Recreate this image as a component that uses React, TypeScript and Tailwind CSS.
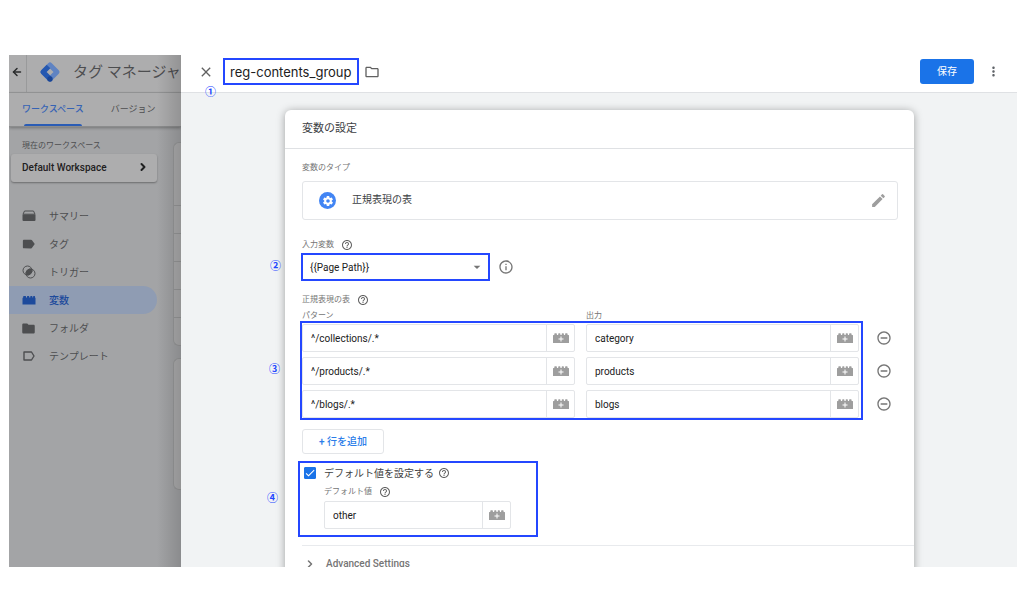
import { useState } from "react";
import type { ReactNode } from "react";
import { ArrowLeft, ChevronRight } from "lucide-react";
import {
  MdArrowDropDown,
  MdCheck,
  MdClose,
  MdFolder,
  MdHelpOutline,
  MdInfoOutline,
  MdLabel,
  MdMoreVert,
  MdOutlineFolder,
  MdRemoveCircleOutline,
} from "react-icons/md";

interface Row {
  pattern: string;
  output: string;
}

const initialRows: Row[] = [
  { pattern: "^/collections/.*", output: "category" },
  { pattern: "^/products/.*", output: "products" },
  { pattern: "^/blogs/.*", output: "blogs" },
];

const LogoIcon = () => (
  <svg width="22" height="22" viewBox="0 0 22 22" fill="none" strokeWidth="5" strokeLinejoin="round" className="shrink-0">
    <path d="M11 4l7 7-7 7-7-7z" stroke="#5f83c2" />
    <path d="M9.500 5.500L4 11l7 7" stroke="#2558b0" />
    <circle cx="11" cy="18" r="2.700" fill="#194596" />
  </svg>
);

const SummaryIcon = () => (
  <svg width="14" height="12" viewBox="0 0 14 12" fill="currentColor">
    <path d="M2.500 1h9L13 4.200H1z" fill="none" stroke="currentColor" />
    <path d="M.5 4.500h13V10a1 1 0 01-1 1h-11a1 1 0 01-1-1z" />
  </svg>
);

const TriggerIcon = () => (
  <svg width="14" height="14" viewBox="0 0 14 14" fill="none" stroke="currentColor">
    <circle cx="5.500" cy="5.500" r="4.500" />
    <circle cx="8.500" cy="8.500" r="4.500" />
    <path d="M4.200 9.800A4.500 4.500 0 019.800 4.200 4.500 4.500 0 014.200 9.800z" fill="currentColor" />
  </svg>
);

const TemplateIcon = () => (
  <svg width="12" height="10" viewBox="0 0 12 10" fill="none" stroke="currentColor" strokeWidth="1.400" strokeLinejoin="round">
    <path d="M1 1h7.500L11 5 8.500 9H1z" />
  </svg>
);

const BrickIcon = () => (
  <svg width="14" height="10" viewBox="0 0 14 10" fill="currentColor">
    <path d="M.5 3.500Q.5 2.500 1.200 2.500V1.500Q1.200 1 1.700 1h1.800q.5 0 .5.500v1h1v-1Q5 1 5.500 1h1.200q.5 0 .5.500v1h1.100v-1q0-.5.500-.5h1.100q.5 0 .5.500v1h.7v-1q0-.5.500-.5h.9q.5 0 .5.500v1q.5 0 .5 1V9.500H.5z" />
  </svg>
);

const BrickPlusIcon = () => (
  <svg width="16" height="10" viewBox="0 0 16 10" fill="currentColor">
    <path d="M0 2.500Q0 2 .500 2H1.300V1Q1.300.300 2 .300h1.200q.7 0 .7.700V2h1.300V1Q5.200.300 5.900.300h.8q.7 0 .7.700V2h1.300V1q0-.7.700-.7h.8q.7 0 .7.700V2h1.200V1q0-.7.700-.7h1.100q.7 0 .7.700V2h.9q.5 0 .5.500V10H0z" />
    <path d="M8 3.500v5M5.500 6h5" stroke="#fff" />
  </svg>
);

const PencilIcon = () => (
  <svg width="17" height="17" viewBox="0 0 24 24" fill="currentColor">
    <path d="M3 17.250V21h3.750L17.810 9.940l-3.750-3.750L3 17.250zM20.710 7.040a1 1 0 000-1.410l-2.340-2.340a1 1 0 00-1.410 0l-1.830 1.830 3.750 3.750 1.830-1.830z" />
  </svg>
);

const GearIcon = () => (
  <svg width="12" height="12" viewBox="0 0 24 24" fill="currentColor">
    <path d="M19.430 12.980c.04-.32.070-.64.070-.98s-.03-.66-.07-.98l2.110-1.650c.19-.15.240-.42.120-.64l-2-3.460c-.12-.22-.39-.3-.61-.22l-2.490 1c-.52-.4-1.080-.73-1.690-.98l-.38-2.650C14.460 2.180 14.250 2 14 2h-4c-.25 0-.46.180-.49.420l-.38 2.650c-.61.250-1.170.590-1.690.98l-2.490-1c-.23-.09-.49 0-.61.220l-2 3.460c-.13.220-.07.490.120.640l2.110 1.650c-.04.320-.07.650-.07.980s.03.660.070.980l-2.110 1.650c-.19.150-.24.420-.12.640l2 3.460c.12.220.39.300.61.220l2.490-1c.52.400 1.080.730 1.690.98l.38 2.650c.03.240.24.420.49.420h4c.25 0 .46-.18.490-.42l.38-2.650c.61-.25 1.170-.59 1.690-.98l2.490 1c.23.090.49 0 .61-.22l2-3.460c.12-.22.070-.49-.12-.64l-2.110-1.650zM12 15.500c-1.930 0-3.500-1.570-3.500-3.500s1.570-3.500 3.500-3.500 3.500 1.570 3.500 3.500-1.570 3.500-3.500 3.500z" />
  </svg>
);

const navItems = [
  { label: "サマリー", icon: <SummaryIcon /> },
  { label: "タグ", icon: <MdLabel size={16} /> },
  { label: "トリガー", icon: <TriggerIcon /> },
  { label: "変数", icon: <BrickIcon />, active: true },
  { label: "フォルダ", icon: <MdFolder size={15} /> },
  { label: "テンプレート", icon: <TemplateIcon /> },
];

function Sidebar() {
  return (
    <aside className="relative flex w-[172px] shrink-0 flex-col overflow-hidden bg-[#a3a4a6] text-[#4d4e50]">
      <div className="flex h-[38px] shrink-0 items-center border-b border-[#999a9b] bg-[#adadae]">
        <button aria-label="戻る" className="flex h-full w-[18px] shrink-0 items-center justify-center border-r border-[#999a9b] pb-1 pr-[2px] text-[#2a2b2c]">
          <ArrowLeft size={12} strokeWidth={3} />
        </button>
        <div className="flex items-center gap-3 pb-1 pl-3">
          <LogoIcon />
          <span className="whitespace-nowrap text-[15px] leading-5">タグ マネージャ</span>
        </div>
      </div>
      <nav className="flex h-[34px] shrink-0 gap-[27px] border-b border-[#8b8c8d] bg-[#adadae] pl-[13px] text-[9px] shadow-[0_1px_3px_rgba(0,0,0,0.3)]">
        <a href="#workspace" className="relative flex items-center whitespace-nowrap font-medium text-[#3563b5]">
          ワークスペース
          <span className="absolute inset-x-[2px] bottom-0 h-[2px] rounded-t bg-[#2a5cb5]" />
        </a>
        <a href="#version" className="flex items-center whitespace-nowrap">
          バージョン
        </a>
      </nav>
      <div className="flex min-h-0 flex-1">
        <div className="min-w-0 flex-1">
          <p className="pl-[13px] pt-[13px] text-[8px] leading-3">現在のワークスペース</p>
          <button className="ml-[2px] mt-[2px] flex h-7 w-[146px] items-center justify-between rounded-[3px] bg-[#adadae] pb-[2px] pl-[11px] pr-2 text-[10px] font-medium text-[#1f2021] shadow-[0_1px_2px_rgba(0,0,0,0.35)]">
            Default Workspace
            <ChevronRight size={12} strokeWidth={4} />
          </button>
          <ul className="mt-5 w-[148px] text-[10px]">
            {navItems.map((item) => (
              <li key={item.label}>
                <a
                  href="#nav"
                  className={`flex h-7 items-center gap-[13px] rounded-r-full pl-3 ${
                    item.active ? "bg-[#8f9cb3] font-medium text-[#1d4a9c]" : ""
                  }`}
                >
                  <span className="flex w-[15px] justify-center">{item.icon}</span>
                  {item.label}
                </a>
              </li>
            ))}
          </ul>
        </div>
        <div className="w-2 shrink-0 pt-[15px]">
          <div className="flex h-[204px] flex-col overflow-hidden rounded-l-md border border-r-0 border-[#98999a] bg-[#adadae]">
            <div className="h-[66px]" />
            {[0, 1, 2, 3, 4].map((n) => (
              <div key={n} className="h-7 shrink-0 border-t border-[#98999a]" />
            ))}
          </div>
          <div className="mt-3 h-[132px] rounded-l-md border border-r-0 border-[#98999a] bg-[#adadae]" />
        </div>
      </div>
      <div className="pointer-events-none absolute inset-y-0 right-0 w-6 bg-linear-to-r from-transparent to-black/15" />
    </aside>
  );
}

// Blue frame drawn over a form section, with its step number in the left margin
function Highlight({ step, className }: { step: string; className: string }) {
  return (
    <div className={`pointer-events-none absolute border-2 border-[#2447ff] ${className}`}>
      <span className="absolute inset-y-0 flex items-center text-[11px] font-bold text-[#2447ff]">
        <span className="absolute right-[22px]">{step}</span>
      </span>
    </div>
  );
}

function FieldLabel({ children, htmlFor }: { children: ReactNode; htmlFor?: string }) {
  return (
    <div className="flex h-3 items-center gap-[7px] text-[8px] leading-3 text-[#757575]">
      <label htmlFor={htmlFor}>{children}</label>
      <MdHelpOutline size={12} className="text-[#616161]" />
    </div>
  );
}

function VariableInput({ id, label, value }: { id?: string; label?: string; value: string }) {
  return (
    <div className="flex h-7 rounded-[2px] border border-[#e3e5e8] text-[10px]">
      <input id={id} aria-label={label} defaultValue={value} className="min-w-0 flex-1 bg-transparent px-2 text-[#212121] outline-none" />
      <button aria-label="変数を選択" className="flex w-7 shrink-0 items-center justify-center border-l border-[#e3e5e8] text-[#9e9e9e]">
        <BrickPlusIcon />
      </button>
    </div>
  );
}

function RegexTable() {
  const [rows, setRows] = useState(initialRows);

  return (
    <>
      <div className="relative mt-1">
        <table className="w-full table-fixed">
          <colgroup>
            <col />
            <col />
            <col className="w-7" />
          </colgroup>
          <thead>
            <tr className="text-left text-[8px] leading-3 text-[#757575]">
              <th className="pb-[2px] font-normal">パターン</th>
              <th className="pb-[2px] font-normal">出力</th>
              <th />
            </tr>
          </thead>
          <tbody>
            {rows.map((row, i) => (
              <tr key={row.pattern}>
                <td className="pb-[5px] pr-[11px]">
                  <VariableInput label={`パターン ${i + 1}`} value={row.pattern} />
                </td>
                <td className="pb-[5px] pr-[11px]">
                  <VariableInput label={`出力 ${i + 1}`} value={row.output} />
                </td>
                <td className="pb-[5px]">
                  <button
                    aria-label="行を削除"
                    onClick={() => setRows(rows.filter((r) => r !== row))}
                    className="mx-auto flex text-[#757575]"
                  >
                    <MdRemoveCircleOutline size={16} />
                  </button>
                </td>
              </tr>
            ))}
          </tbody>
        </table>
        <Highlight step="③" className="-left-[2px] bottom-[3px] right-[35px] top-[11px]" />
      </div>
      <button
        onClick={() => setRows([...rows, { pattern: "", output: "" }])}
        className="mt-[6px] h-[25px] w-[82px] rounded-[3px] border border-[#e3e5e8] text-[10px] font-medium text-[#2b7de9]"
      >
        + 行を追加
      </button>
    </>
  );
}

function DefaultValue() {
  return (
    <div className="relative mt-[11px] w-[209px]">
      <div className="flex h-4 items-center pl-[2px]">
        <span className="relative flex">
          <input
            id="use-default"
            type="checkbox"
            defaultChecked
            className="peer h-3 w-3 appearance-none rounded-[1px] border border-[#757575] checked:border-[#1a73e8] checked:bg-[#1a73e8]"
          />
          <MdCheck size={12} className="pointer-events-none absolute inset-0 hidden text-white peer-checked:block" />
        </span>
        <label htmlFor="use-default" className="pl-2 pr-1 text-[10px] text-[#424242]">
          デフォルト値を設定する
        </label>
        <MdHelpOutline size={12} className="text-[#616161]" />
      </div>
      <div className="pl-[22px] pt-[5px]">
        <FieldLabel htmlFor="default-value">デフォルト値</FieldLabel>
        <div className="pt-[3px]">
          <VariableInput id="default-value" value="other" />
        </div>
      </div>
      <Highlight step="④" className="-bottom-2 -left-1 -right-[27px] -top-1" />
    </div>
  );
}

function VariableCard() {
  return (
    <section className="rounded-t-md bg-white shadow-[0_1px_8px_rgba(0,0,0,0.35)]">
      <h2 className="flex h-[39px] items-center border-b border-[#dfe1e4] px-[17px] text-[11px] text-[#3c4043]">変数の設定</h2>
      <div className="pl-[17px] pr-4 pt-[13px]">
        <p className="text-[8px] leading-3 text-[#757575]">変数のタイプ</p>
        <button className="mt-[7px] flex h-[39px] w-full items-center rounded-[3px] border border-[#e3e5e8] pl-4 pr-[10px] text-left text-[10px] text-[#3c4043]">
          <span className="flex h-[17px] w-[17px] items-center justify-center rounded-full bg-[#4285f4] text-white">
            <GearIcon />
          </span>
          <span className="flex-1 pb-[2px] pl-4">正規表現の表</span>
          <span className="text-[#9e9e9e]">
            <PencilIcon />
          </span>
        </button>

        <div className="pt-[19px]">
          <FieldLabel htmlFor="input-variable">入力変数</FieldLabel>
        </div>
        <div className="mt-[3px] flex items-center gap-[9px]">
          <div className="relative">
            <select
              id="input-variable"
              className="block h-[26px] w-[187px] appearance-none bg-white px-2 text-[10px] text-[#212121] outline-none"
            >
              <option>{"{{Page Path}}"}</option>
            </select>
            <MdArrowDropDown size={16} className="pointer-events-none absolute right-1 top-[5px] text-[#757575]" />
            <Highlight step="②" className="-inset-x-px -inset-y-px" />
          </div>
          <MdInfoOutline size={16} className="text-[#757575]" />
        </div>

        <div className="pt-[14px]">
          <FieldLabel>正規表現の表</FieldLabel>
        </div>
        <RegexTable />
        <DefaultValue />
      </div>
      <button className="ml-[17px] mt-4 flex h-9 w-[calc(100%-17px)] items-center gap-[10px] border-t border-[#e8eaed] pl-[2px] text-[10px] font-medium text-[#757575]">
        <ChevronRight size={12} strokeWidth={3} />
        Advanced Settings
      </button>
    </section>
  );
}

export default function App() {
  return (
    <div className="h-screen bg-white pb-[47px] pl-[9px] pr-[7px] pt-[55px] font-['Roboto','Noto_Sans_CJK_JP',sans-serif]">
      <div className="flex h-full overflow-hidden">
        <Sidebar />
        <main className="flex min-w-0 flex-1 flex-col bg-[#f1f3f4]">
          <header className="flex h-[38px] shrink-0 items-center border-b border-[#dfe1e4] bg-white pb-1 pl-[17px] pr-4">
            <button aria-label="閉じる" className="text-[#616161]">
              <MdClose size={16} />
            </button>
            <div className="relative ml-[9px]">
              <input
                aria-label="変数名"
                defaultValue="reg-contents_group"
                className="block h-[27px] w-[136px] border-2 border-[#2447ff] pl-[5px] font-['Inter',sans-serif] text-[13px] text-[#212121] outline-none"
              />
              <span className="absolute right-full top-[27px] pr-[7px] text-[11px] font-bold leading-4 text-[#2447ff]">①</span>
            </div>
            <button aria-label="フォルダ" className="ml-[5px] text-[#616161]">
              <MdOutlineFolder size={16} />
            </button>
            <button className="ml-auto h-[25px] w-[54px] rounded-[3px] bg-[#1a73e8] text-[10px] text-white">保存</button>
            <button aria-label="その他" className="ml-3 text-[#5f6368]">
              <MdMoreVert size={15} />
            </button>
          </header>
          <div className="min-h-0 flex-1 overflow-hidden pl-[104px] pr-[103px] pt-[17px]">
            <VariableCard />
          </div>
        </main>
      </div>
    </div>
  );
}
